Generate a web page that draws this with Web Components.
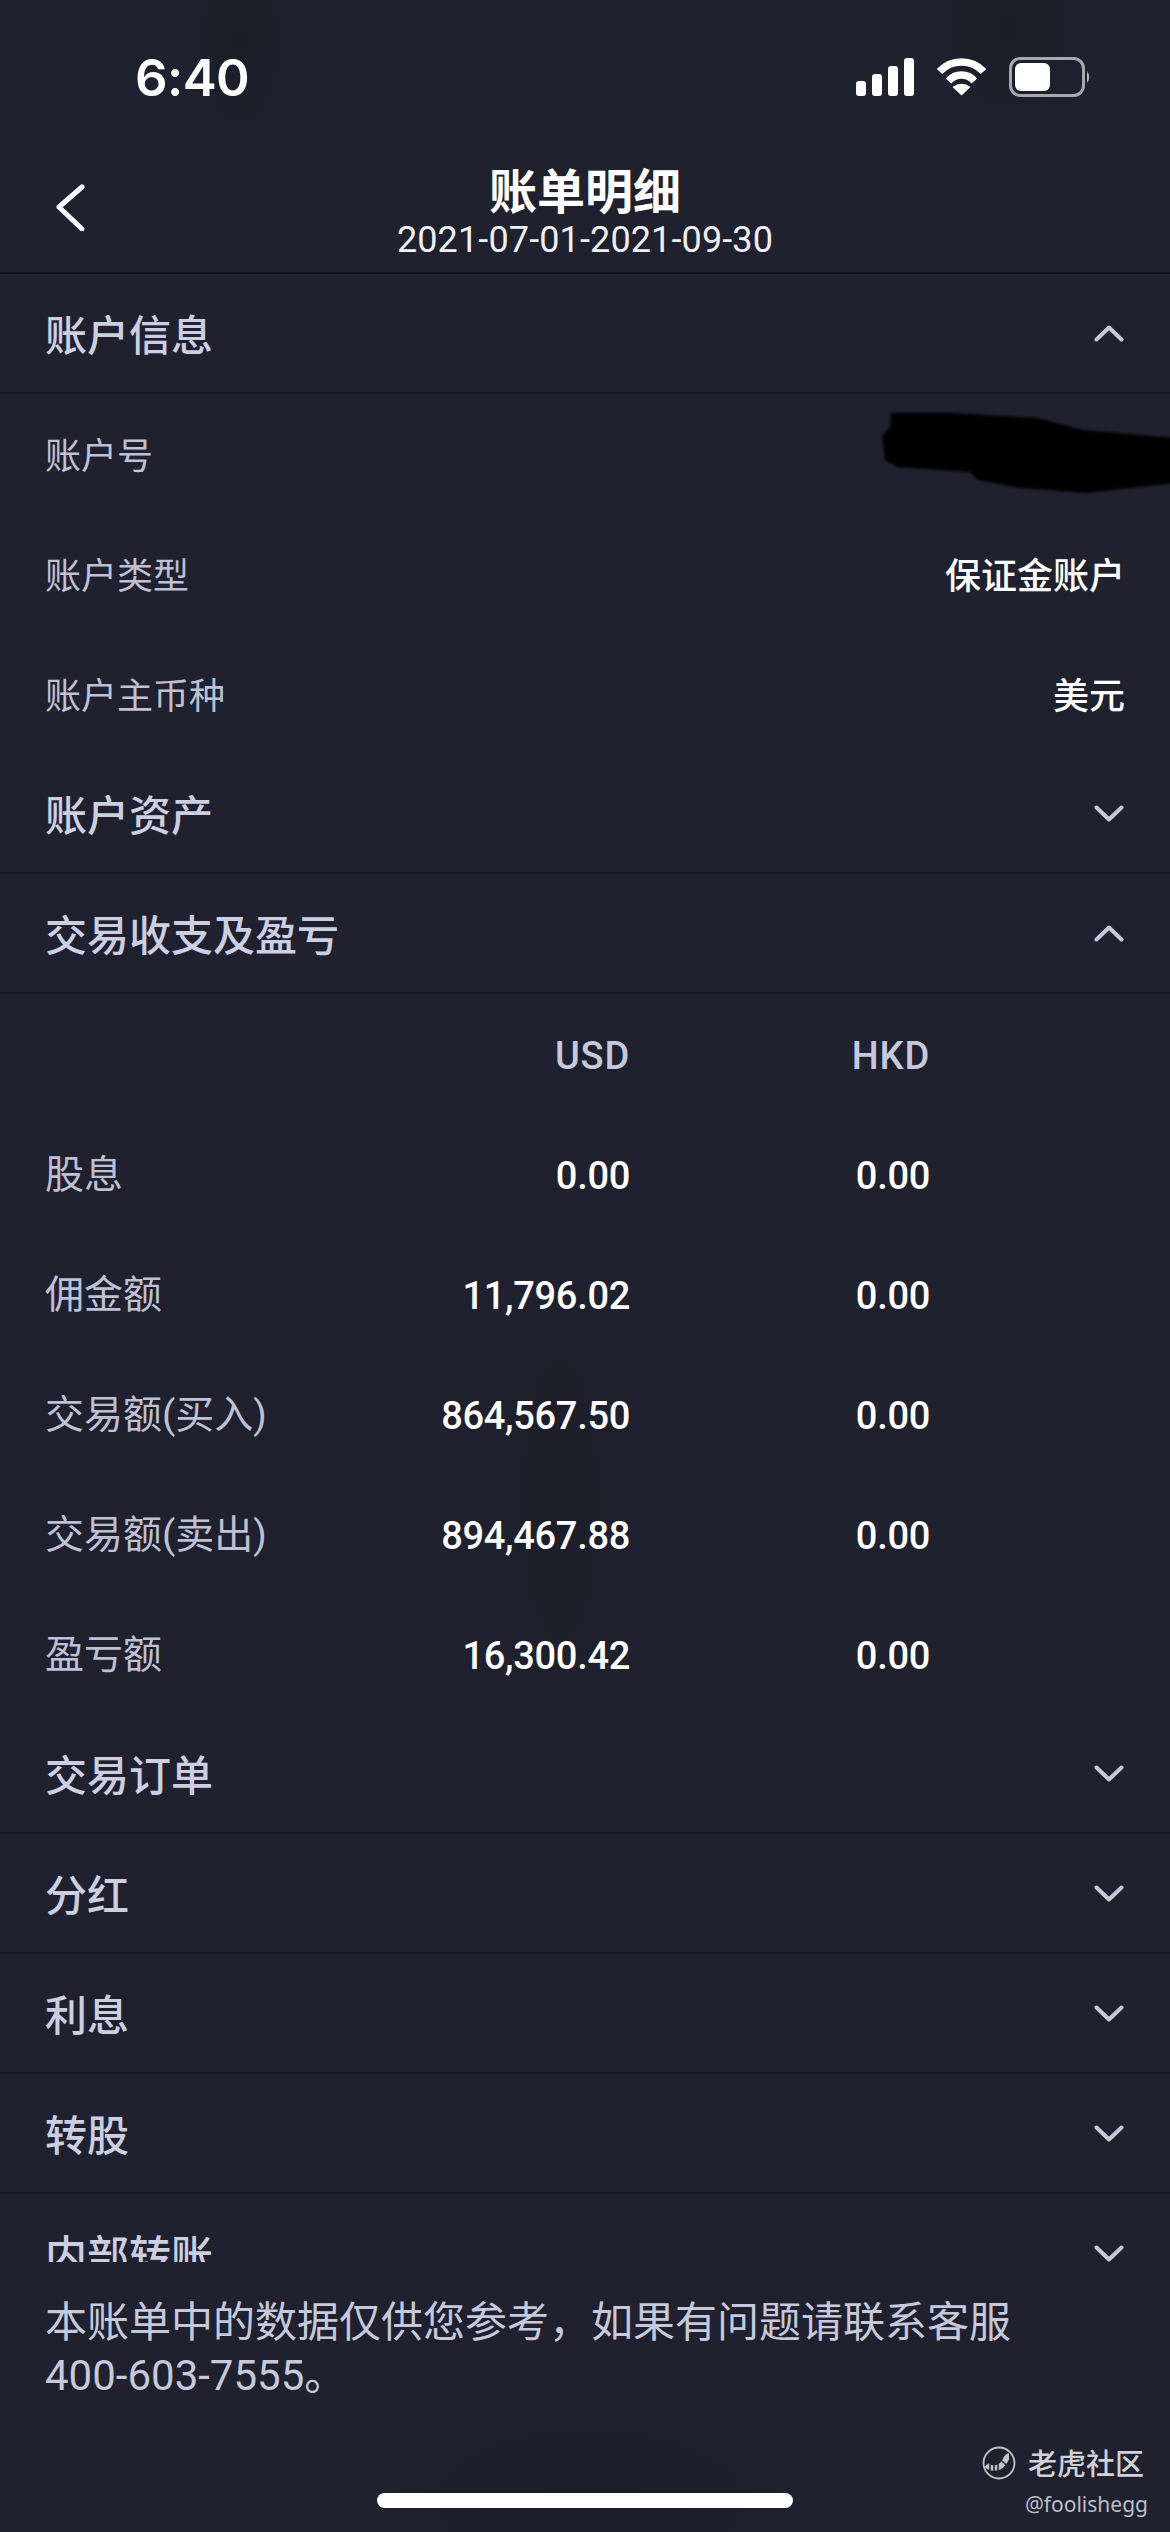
<!DOCTYPE html>
<html lang="zh-CN"><head><meta charset="utf-8"><title>账单明细</title>
<style>
html,body{margin:0;padding:0;background:#1f212e}
</style></head>
<body>
<bill-page>
  <status-bar slot="top"></status-bar>
  <nav-header slot="top" heading="账单明细" sub="2021-07-01-2021-09-30"></nav-header>
  <section-row open>账户信息</section-row>
  <info-row label="账户号"></info-row>
  <info-row label="账户类型">保证金账户</info-row>
  <info-row label="账户主币种">美元</info-row>
  <section-row>账户资产</section-row>
  <section-row open>交易收支及盈亏</section-row>
  <money-row head usd="USD" hkd="HKD"></money-row>
  <money-row label="股息" usd="0.00" hkd="0.00"></money-row>
  <money-row label="佣金额" usd="11,796.02" hkd="0.00"></money-row>
  <money-row label="交易额(买入)" usd="864,567.50" hkd="0.00"></money-row>
  <money-row label="交易额(卖出)" usd="894,467.88" hkd="0.00"></money-row>
  <money-row label="盈亏额" usd="16,300.42" hkd="0.00"></money-row>
  <section-row>交易订单</section-row>
  <section-row>分红</section-row>
  <section-row>利息</section-row>
  <section-row>转股</section-row>
  <section-row>内部转账</section-row>
  <bill-footer slot="bottom">本账单中的数据仅供您参考，如果有问题请联系客服<span style="white-space:nowrap;display:inline-block">400-603-7555。</span></bill-footer>
  <redaction-mark slot="over"></redaction-mark>
  <home-bar slot="over"></home-bar>
  <tiger-mark slot="over"></tiger-mark>
</bill-page>
<script>
const FONT = 'Roboto,"Noto Sans CJK SC",sans-serif';
function def(name, html){
  customElements.define(name, class extends HTMLElement{
    constructor(){super();this.attachShadow({mode:'open'});}
    connectedCallback(){this.shadowRoot.innerHTML = typeof html==='function'?html(this):html;}
  });
}
def('bill-page',`<style>
:host{display:flex;flex-direction:column;position:relative;width:1170px;height:2532px;overflow:hidden;
 background:#1f212e;font-family:${FONT};
 background-image:radial-gradient(ellipse 60px 130px at 240px 40px,#1b1c28 0,transparent 100%),
 radial-gradient(ellipse 90px 120px at 1010px 30px,#1b1c28 0,transparent 100%),
 radial-gradient(ellipse 70px 260px at 560px 1500px,#1b1d29 0,transparent 100%),
 radial-gradient(ellipse 240px 110px at 590px 2500px,#1b1c29 0,transparent 100%);}
.list{flex:1;min-height:0;overflow:hidden;display:flex;flex-direction:column}
</style><slot name="top"></slot><div class="list"><slot></slot></div><slot name="bottom"></slot><slot name="over"></slot>`);
def('status-bar',`<style>
:host{display:flex;height:150px;box-sizing:border-box;padding:51px 79px 0 135px;justify-content:space-between;align-items:flex-start;color:#fff}
.t{font:600 51px/54px Inter,sans-serif;letter-spacing:-.6px}
.i{display:flex;gap:22px;margin-top:7px;align-items:flex-start}
svg{display:block}
</style><div class="t">6:40</div><div class="i">
<svg width="58" height="38" viewBox="0 0 58 38" fill="#fff"><rect x="0" y="23" width="10" height="15" rx="3"/><rect x="16" y="16" width="10" height="22" rx="3"/><rect x="32" y="8" width="10" height="30" rx="3"/><rect x="48" y="0" width="10" height="38" rx="3"/></svg>
<svg width="51" height="38" viewBox="0 0 51 38"><path d="M3.5 13.5A30 30 0 0 1 47.5 13.5" fill="none" stroke="#fff" stroke-width="7.5"/><path d="M12.5 23A17 17 0 0 1 38.5 23" fill="none" stroke="#fff" stroke-width="7.5"/><path d="M25.5 37.5 L16.5 29 Q25.5 22.500 34.500 29Z" fill="#fff"/></svg>
<svg width="82" height="40" viewBox="0 0 82 40" style="margin:-1px 0 0 0"><rect x="1.500" y="1.500" width="73" height="37" rx="10" fill="none" stroke="#a6a7af" stroke-width="3"/><rect x="6" y="6" width="35" height="28" rx="6" fill="#fff"/><path d="M78 14 Q82.500 20 78 26Z" fill="#b4b5bc"/></svg>
</div>`);
def('nav-header',h=>`<style>
:host{display:block;position:relative;height:124px;box-sizing:border-box;padding-top:10px;text-align:center;color:#fff;border-bottom:2px solid #11121c}
.h{font:700 48px/56px "Noto Sans CJK SC",sans-serif}
.s{font:400 36px/48px Roboto,sans-serif;color:#f0f0f4;letter-spacing:.13px}
svg{position:absolute;left:54px;top:33px}
</style><svg width="32" height="48" viewBox="0 0 32 48" fill="none" stroke="#fff" stroke-width="5" stroke-linecap="round" stroke-linejoin="round"><path d="M28 4 L5 24 L28 46"/></svg>
<div class="h">${h.getAttribute('heading')}</div><div class="s">${h.getAttribute('sub')}</div>`);
def('section-row',h=>`<style>
:host{display:flex;flex:none;height:120px;box-sizing:border-box;padding:0 46px 0 45px;align-items:center;justify-content:space-between;
 color:#cccee2;font:500 42px/1 "Noto Sans CJK SC",sans-serif;border-bottom:2px solid #14151f}
svg{display:block}
</style><slot></slot><svg width="30" height="17" viewBox="0 0 30 17" fill="none" stroke="#c6c8dc" stroke-width="4" stroke-linecap="round" stroke-linejoin="round"><path d="${h.hasAttribute('open')?'M2.500 14.500 L15 2.500 L27.500 14.500':'M2.500 2.500 L15 14.500 L27.500 2.500'}"/></svg>`);
def('info-row',h=>`<style>
:host{display:flex;flex:none;height:120px;box-sizing:border-box;padding:0 45px 3px 45px;align-items:center;justify-content:space-between;
 font:400 36px/1 "Noto Sans CJK SC",sans-serif;color:#bec0d4}
.v{color:#fff;font-weight:500}
</style><span>${h.getAttribute('label')}</span><span class="v"><slot></slot></span>`);
def('money-row',h=>`<style>
:host{display:grid;flex:none;height:120px;box-sizing:border-box;padding:3px 240px 0 45px;align-items:center;grid-template-columns:1fr 300px;
 font:400 39px/1 Roboto,"Noto Sans CJK SC",sans-serif;color:#bec0d4}
.l{grid-column:1;grid-row:1}
.u,.k{font:500 38px/1 Roboto,sans-serif;text-align:right;color:#fff;letter-spacing:-.3px;grid-row:1}
.u{grid-column:1}.k{grid-column:2}
:host([head]) .u,:host([head]) .k{color:#c6c8dc;font-weight:500;letter-spacing:.8px}
</style><span class="l">${h.getAttribute('label')||''}</span><span class="u">${h.getAttribute('usd')}</span><span class="k">${h.getAttribute('hkd')}</span>`);
def('bill-footer',`<style>
:host{display:block;height:270px;flex:none;box-sizing:border-box;padding:34px 45px 0;background:transparent;
 color:#c6c8dc;font:400 42px/53px Roboto,"Noto Sans CJK SC",sans-serif}
</style><slot></slot>`);
def('redaction-mark',`<style>
:host{display:block;position:absolute;left:860px;top:400px;width:310px;height:110px}
svg{display:block;overflow:visible}
</style><svg width="310" height="110" viewBox="860 400 310 110"><defs><filter id="b" x="-5%" y="-10%" width="110%" height="120%"><feGaussianBlur stdDeviation="1.500"/></filter></defs>
<path filter="url(#b)" fill="#000" d="M891 413 L953 413 L1037 418 L1083 430 L1175 438 L1175 483 L1130 488 L1087 493 L1020 488 L977 480 L970 472 L897 467 L885 460 L882 437 L890 427Z"/></svg>`);
def('home-bar',`<style>
:host{display:block;position:absolute;left:377px;top:2493px;width:416px;height:15px;background:#fff;border-radius:8px}
</style>`);
def('tiger-mark',`<style>
:host{display:block;position:absolute;left:982px;top:2444px;width:170px;height:80px;font-family:"Noto Sans CJK SC",sans-serif}
svg{position:absolute;left:0;top:2px}
.a{position:absolute;left:46px;top:0;font-size:29px;line-height:36px;font-weight:500;color:#d2d2d6;white-space:nowrap}
.b{position:absolute;right:4px;top:45px;font:400 21px/30px "Noto Sans",sans-serif;color:#bcbec8;white-space:nowrap}
</style><svg width="34" height="34" viewBox="0 0 34 34" fill="none" stroke="#c4c4c8"><circle cx="17" cy="17" r="15.500" stroke-width="1.800"/>
<path d="M4.500 19 C9 24 19 23 23 15 C24.500 12 25 10 27 10" stroke-width="5.500"/><path d="M8 18v7M12 19v7M16 18v6M20 15l4 4" stroke="#1f212e" stroke-width="1.500"/></svg>
<span class="a">老虎社区</span><span class="b">@foolishegg</span>`);
</script>
</body></html>
